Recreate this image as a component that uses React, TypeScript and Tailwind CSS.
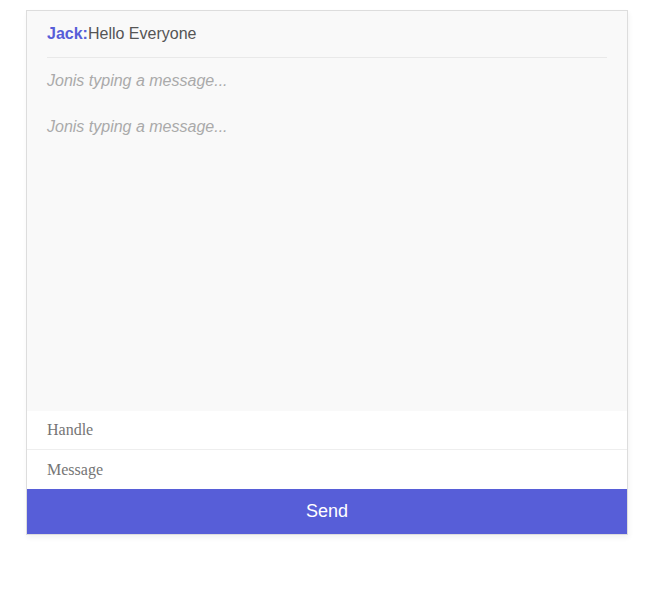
import React from "react";

export default function App() {
  const feedback = ["Jonis typing a message...", "Jonis typing a message..."];

  return (
    <div className="w-[662px] h-[597px] bg-white pt-[10px] pl-[26px]">
      <div className="w-[602px] border border-[#ddd] shadow-[1px_3px_5px_rgba(0,0,0,0.05)] bg-white">
        <div className="h-[400px] overflow-auto px-5 bg-[#f9f9f9] font-['Liberation_Sans',Arial,sans-serif] text-base">
          <p className="py-[14px] leading-[18px] text-[#555] border-b border-[#e9e9e9]">
            <strong className="text-[#575ed8]">Jack:</strong>Hello Everyone
          </p>
          {feedback.map((line, index) => (
            <p key={index} className="py-[14px] leading-[18px] text-[#aaa] italic">
              {line}
            </p>
          ))}
        </div>
        <input
          className="block w-full px-5 py-[10px] text-base leading-[18px] border-b border-[#eee] outline-none font-['Liberation_Serif','Times_New_Roman',serif] placeholder:text-[#757575]"
          placeholder="Handle"
        />
        <input
          className="block w-full px-5 py-[10px] text-base leading-[19px] outline-none font-['Liberation_Serif','Times_New_Roman',serif] placeholder:text-[#757575]"
          placeholder="Message"
        />
        <button className="block w-full py-3 bg-[#575ed8] text-white text-lg leading-[21px] font-['Liberation_Sans',Arial,sans-serif]">
          Send
        </button>
      </div>
    </div>
  );
}
